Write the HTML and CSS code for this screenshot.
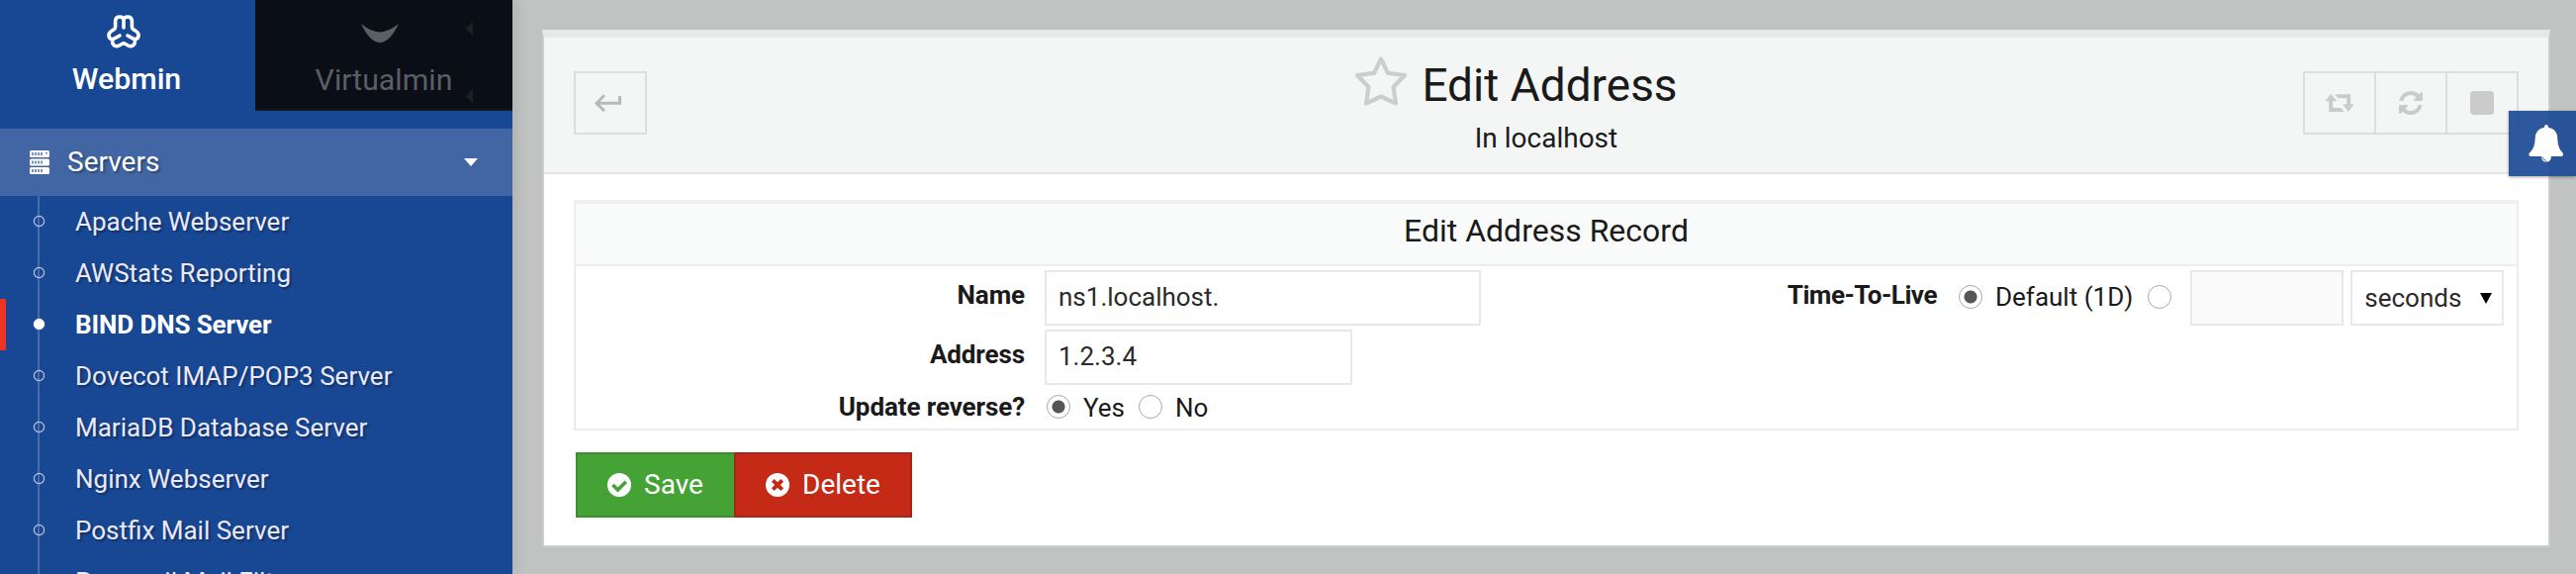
FILE: index.html
```html
<!DOCTYPE html>
<html lang="en">
<head>
<meta charset="utf-8">
<title>Edit Address</title>
<link rel="stylesheet" href="styles.css">
</head>
<body>
<div class="app">
  <aside class="sidebar">
    <div class="tabs">
      <div class="tab tab-active">
        <svg class="logo" viewBox="0 0 34 34" width="34" height="34" fill="none" stroke="#fff" stroke-width="3.600" stroke-linecap="round" stroke-linejoin="round"><path d="M17 13V5.200Q16.600 2 13.100 2Q8.800 2 8.600 6V12.500Q8.500 14 7 14.800Q1.900 17.500 1.900 20.500Q2 24.300 5.800 24.800Q4.800 31 9.500 31.600Q11 31.800 12.500 31L17 28.500L21.500 31Q23 31.800 24.500 31.600Q29.200 31 28.200 24.800Q32 24.300 32.100 20.500Q32.100 17.500 27 14.800Q25.500 14 25.400 12.500V6Q25.200 2 20.900 2Q17.400 2 17 5.200M5.800 24.800L13 21M28.200 24.800L21 21"/></svg>
        <span class="tab-label">Webmin</span>
      </div>
      <div class="tab tab-dark">
        <svg class="logo-v" viewBox="0 0 38 20" width="38" height="20"><path d="M0 0Q10 8 19 8.500Q28 8 38 0Q29 19 19 19Q9 19 0 0Z" fill="#5b5e63"/></svg>
        <span class="tab-label">Virtualmin</span>
        <i class="notch notch-top"></i><i class="notch notch-bottom"></i>
      </div>
    </div>
    <div class="section">
      <svg class="server-icon" viewBox="0 0 20 24" width="20" height="24"><g fill="#fff"><rect y="0" width="20" height="7" rx="1.500"/><rect y="8.500" width="20" height="7" rx="1.500"/><rect y="17" width="20" height="7" rx="1.500"/></g><path d="M3 2v3M6 2v3M9 2v3M12 2v3M3 10.500v3M6 10.500v3M9 10.500v3M12 10.500v3M3 19v3M6 19v3M9 19v3M12 19v3M17 2v1.500" stroke="#4166a3" stroke-width="1.400"/></svg>
      <span class="section-label">Servers</span>
      <i class="caret"></i>
    </div>
    <ul class="menu">
      <li><i></i><span>Apache Webserver</span></li>
      <li><i></i><span>AWStats Reporting</span></li>
      <li class="current"><i></i><span>BIND DNS Server</span></li>
      <li><i></i><span>Dovecot IMAP/POP3 Server</span></li>
      <li><i></i><span>MariaDB Database Server</span></li>
      <li><i></i><span>Nginx Webserver</span></li>
      <li><i></i><span>Postfix Mail Server</span></li>
      <li><i></i><span>Procmail Mail Filter</span></li>
    </ul>
  </aside>
  <main class="content">
    <section class="panel">
      <header class="panel-head">
        <div class="btn-group"><div class="tool tool-back"><svg viewBox="0 0 28 18" width="28" height="18" fill="none" stroke="#b9b9b9" stroke-width="3"><path d="M25.500 2V9.300H2.500M10 1.200L2 9.300L10 17"/></svg></div></div>
        <div class="heading">
          <h1><svg class="star" viewBox="0 0 52 50" width="52" height="50" fill="none" stroke="#cdcdcd" stroke-width="4.200" stroke-linejoin="round"><path d="M26 2.500L33 16.800L50 19L38.500 31L41 47.500L26 40.500L11 47.500L13.500 31L2 19L19 16.800Z"/></svg><span>Edit Address</span></h1>
          <div class="subtitle">In localhost</div>
        </div>
        <div class="btn-group">
          <div class="tool"><svg viewBox="150 227 90 55" width="30" height="18" fill="#cbcbcb"><path d="M168 227L187 249H174V270H199L210 282H162V249H150ZM180 228H229V258H240L222 282L204 258H217V240H191Z"/></svg></div>
          <div class="tool"><svg viewBox="0 128 1536 1536" width="24" height="24" fill="#cbcbcb"><path d="M1511 1056q0 5-1 7-64 268-268 434.500T764 1664q-146 0-282.500-55T238 1452l-129 129q-19 19-45 19t-45-19-19-45v-448q0-26 19-45t45-19h448q26 0 45 19t19 45-19 45l-137 137q71 66 161 102t187 36q134 0 250-65t186-179q11-17 53-117 8-23 30-23h192q13 0 22.500 9.500t9.500 22.500zm25-800v448q0 26-19 45t-45 19h-448q-26 0-45-19t-19-45 19-45l138-138Q969 384 768 384q-134 0-250 65T332 628q-11 17-53 117-8 23-30 23H50q-13 0-22.500-9.500T18 736v-7q65-268 270-434.500T768 128q146 0 284 55.500T1297 340l130-129q19-19 45-19t45 19 19 45z"/></svg></div>
          <div class="tool"><i class="stop"></i></div>
        </div>
      </header>
      <div class="panel-body">
        <div class="record">
          <div class="record-title"><span>Edit Address Record</span></div>
          <div class="grid">
            <div class="label"><span>Name</span></div>
            <div class="cell"><div class="field field-name"><span>ns1.localhost.</span></div></div>
            <div class="label label-ttl"><span>Time-To-Live</span></div>
            <div class="cell ttl">
              <i class="radio on"></i><span class="default">Default (1D)</span><i class="radio"></i>
              <div class="field field-ttl"></div>
              <div class="field field-unit"><span>seconds</span><i class="arrow"></i></div>
            </div>
            <div class="label"><span>Address</span></div>
            <div class="cell span"><div class="field field-addr"><span>1.2.3.4</span></div></div>
            <div class="label label-reverse"><span>Update reverse?</span></div>
            <div class="cell span reverse"><i class="radio on"></i><span class="yes">Yes</span><i class="radio"></i><span class="no">No</span></div>
          </div>
        </div>
        <div class="actions">
          <div class="btn save"><svg viewBox="0 0 24 24" width="24" height="24"><circle cx="12" cy="12" r="12" fill="#fff"/><path d="M5.500 12L10.500 17L18.800 8.700" fill="none" stroke="#44a334" stroke-width="3.600"/></svg><span>Save</span></div>
          <div class="btn delete"><svg viewBox="0 0 24 24" width="24" height="24"><circle cx="12" cy="12" r="12" fill="#fff"/><path d="M7.300 7.300L16.700 16.700M16.700 7.300L7.300 16.700" fill="none" stroke="#c52a16" stroke-width="4"/></svg><span>Delete</span></div>
        </div>
      </div>
    </section>
  </main>
  <div class="bell"><svg viewBox="0 0 36 38" width="36" height="38"><path d="M18 0Q20 0 20 2.800Q29 4 29.300 14Q29.500 24 35 29Q35.500 32 33 32H23Q23 37.500 18 37.500Q13 37.500 13 32H2.500Q0 32 .5 29Q6.500 24 6.700 14Q7 4 16 2.800Q16 0 18 0Z" fill="#fff"/><path d="M14 32.500Q14.500 36 18 36.300" fill="none" stroke="#2a559b" stroke-width=".8"/></svg></div>
</div>
</body>
</html>
```
FILE: styles.css
```css
* { box-sizing: border-box; }
body {
  margin: 0;
  font-family: Roboto, "Liberation Sans", sans-serif;
  font-size: 28px;
  color: #1a1a1a;
  background: #c1c3c2;
}
span { white-space: nowrap; }
i { display: block; flex: none; }
svg { display: block; flex: none; }
.app {
  position: relative;
  display: flex;
  width: 2604px;
  height: 580px;
  overflow: hidden;
}

/* Sidebar */
.sidebar {
  flex: none;
  width: 518px;
  height: 580px;
  background: #184794;
  box-shadow: 2px 0 14px rgba(0, 0, 0, .12);
  overflow: hidden;
}
.tabs { display: flex; height: 130px; }
.tab {
  position: relative;
  display: flex;
  flex-direction: column;
  align-items: center;
  height: 112px;
  font-size: 30.300px;
  line-height: 36px;
}
.tab-active { width: 258px; padding: 15px 9px 0 0; color: #fff; font-weight: 500; }
.tab-active .tab-label { padding-left: 7px; }
.tab-dark {
  width: 260px;
  padding: 24px 0 0;
  color: #5b5e63;
  background: #0a0e17;
  border-bottom: 2px solid #131720;
}
.logo { margin-bottom: 13px; }
.logo-v { margin: 0 9px 19px 0; }
.notch {
  position: absolute;
  left: 213px;
  border: solid transparent;
  border-width: 7px 7px 7px 0;
  border-right-color: #1e2024;
}
.notch-top { top: 22px; }
.notch-bottom { top: 90px; }
.section {
  display: flex;
  align-items: center;
  height: 68px;
  padding: 0 35px 0 30px;
  background: #4166a3;
  color: #fff;
  text-shadow: 2px 2px 2px rgba(0, 0, 0, .3);
}
.server-icon { margin-right: 18px; }
.section-label { flex: 1; margin-top: -2px; }
.caret {
  border: solid transparent;
  border-width: 8px 7px 0;
  border-top-color: #fff;
}
.menu {
  margin: 0;
  padding: 0;
  list-style: none;
  height: 382px;
  background: linear-gradient(#466ca9, #466ca9) 38px 0 / 2px 100% no-repeat;
}
.menu li {
  display: flex;
  align-items: center;
  height: 52px;
  padding-left: 34px;
  color: #ece9f8;
  font-size: 26px;
  text-shadow: 2px 2px 2px rgba(0, 0, 0, .3);
}
.menu i {
  width: 11px;
  height: 11px;
  margin: -1px 31px 0 0;
  border: 1px solid #dfe4f2;
  border-radius: 50%;
  box-shadow: 0 0 1px #c6cfe6;
}
.menu .current { border-left: 6px solid #ee3224; padding-left: 28px; color: #fff; font-weight: 700; letter-spacing: -.1px; text-shadow: none; }
.menu .current i { background: #fff; border-color: #fff; }

/* Main panel */
.content { flex: 1; padding: 30px 26px 27px 30px; }
.panel {
  height: 523px;
  background: #fff;
  border: 2px solid #cdcecd;
  border-top: 8px solid #e8e8e8;
}
.panel-head {
  display: flex;
  justify-content: space-between;
  align-items: flex-start;
  height: 138px;
  padding: 34px 30px 0;
  background: #f4f6f5;
  border-bottom: 2px solid #e5e6e5;
}
.btn-group { display: flex; width: 218px; height: 64px; }
.tool {
  display: flex;
  align-items: center;
  justify-content: center;
  width: 74px;
  height: 64px;
  border: 2px solid #dcdddc;
}
.tool-back { padding-right: 4px; }
.tool + .tool { margin-left: -2px; }
.stop { width: 24px; height: 24px; border-radius: 4px; background: #cbcbcb; }
.heading { display: flex; flex-direction: column; align-items: center; margin-top: -16px; }
h1 {
  display: flex;
  align-items: flex-start;
  margin: 0;
  padding-right: 60px;
  font-size: 46px;
  font-weight: 400;
  line-height: 60px;
}
.star { margin: 1px 15px 0 0; }
.subtitle { margin-top: 7px; line-height: 34px; font-size: 28px; }
.panel-body { padding: 26px 30px 0; }
.record { height: 233px; border: 2px solid #ecedec; border-top: 4px solid #efefef; }
.record-title {
  height: 63px;
  line-height: 54px;
  font-size: 32px;
  text-align: center;
  background: #f9fbfa;
  border-bottom: 2px solid #ecedec;
}
.grid {
  display: grid;
  grid-template-columns: 454px 464px 458px 1fr;
  grid-template-rows: 60px 60px 46px;
  padding-top: 4px;
  font-size: 26px;
  line-height: 30px;
}
.label { padding-top: 10px; text-align: right; font-weight: 700; letter-spacing: -.1px; }
.label-ttl { letter-spacing: -.45px; }
.label-reverse { padding-top: 3px; }
.cell { display: flex; padding-left: 20px; align-items: flex-start; }
.span { grid-column: span 3; }
.field {
  display: flex;
  align-items: center;
  height: 56px;
  padding: 0 12px 2px;
  border: 2px solid #e8e8e8;
  color: #2b2b2b;
}
.field-name { width: 441px; }
.field-addr { width: 311px; padding-bottom: 3px; }
.field-ttl { width: 155px; margin: 0 7px 0 19px; background: #fafafa; }
.field-unit { width: 155px; padding: 0 10px 0 12px; justify-content: space-between; }
.arrow { border: solid transparent; border-width: 11px 6px 0; border-top-color: #000; }
.radio {
  width: 24px;
  height: 24px;
  border: 1.500px solid #a8a8a8;
  border-radius: 50%;
  background: #fff;
}
.radio.on { background: radial-gradient(circle, #555 0 6px, #fff 7px); }
.ttl { padding-left: 22px; }
.ttl .radio { margin-top: 15px; }
.ttl .default { margin: 12px 15px 0 13px; }
.reverse .radio { margin: 6px 0 0 2px; }
.reverse .yes { width: 54px; margin: 4px 0 0 13px; }
.reverse .no { margin: 4px 0 0 13px; }

/* Form buttons */
.actions { display: flex; padding: 22px 0 0 2px; }
.btn {
  display: flex;
  align-items: center;
  gap: 13px;
  height: 66px;
  padding-left: 30px;
  color: #fff;
  font-size: 28px;
}
.btn span { margin-top: -2px; }
.save { width: 160px; background: #44a334; border: 2px solid #3c8f2f; border-right: 0; }
.delete { width: 180px; background: #c52a16; border: 2px solid #a62719; }

.bell {
  position: absolute;
  top: 112px;
  right: 0;
  width: 68px;
  height: 66px;
  padding: 14px 0 0 20px;
  background: rgba(24, 71, 148, .9);
  box-shadow: 0 1px 3px rgba(0, 0, 0, .35);
}
```
